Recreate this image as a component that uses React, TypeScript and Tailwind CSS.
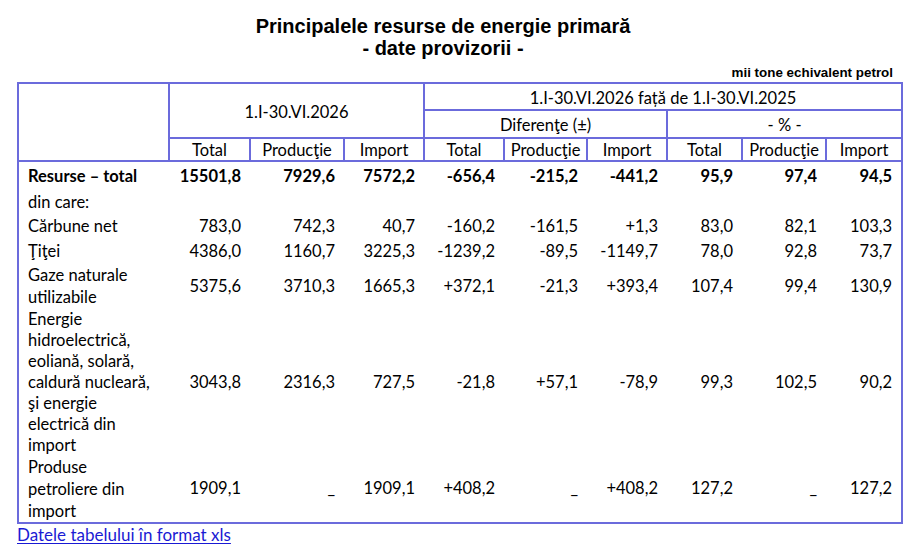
import React from "react";

type Row = {
  label: React.ReactNode;
  values: string[];
  bold?: boolean;
  lh: string;
  h: string;
};

const rows: Row[] = [
  {
    label: "Resurse – total",
    values: ["15501,8", "7929,6", "7572,2", "-656,4", "-215,2", "-441,2", "95,9", "97,4", "94,5"],
    bold: true,
    lh: "leading-[22px]",
    h: "h-[29px]",
  },
  { label: "din care:", values: [], lh: "leading-[22px]", h: "h-[23px]" },
  {
    label: "Cărbune net",
    values: ["783,0", "742,3", "40,7", "-160,2", "-161,5", "+1,3", "83,0", "82,1", "103,3"],
    lh: "leading-[22px]",
    h: "h-[26px]",
  },
  {
    label: "Ţiţei",
    values: ["4386,0", "1160,7", "3225,3", "-1239,2", "-89,5", "-1149,7", "78,0", "92,8", "73,7"],
    lh: "leading-[22px]",
    h: "h-[24px]",
  },
  {
    label: (
      <>
        Gaze naturale
        <br />
        utilizabile
      </>
    ),
    values: ["5375,6", "3710,3", "1665,3", "+372,1", "-21,3", "+393,4", "107,4", "99,4", "130,9"],
    lh: "leading-[22.5px]",
    h: "h-[45px]",
  },
  {
    label: (
      <>
        Energie
        <br />
        hidroelectrică,
        <br />
        eoliană, solară,
        <br />
        caldură nucleară,
        <br />
        şi energie
        <br />
        electrică din
        <br />
        import
      </>
    ),
    values: ["3043,8", "2316,3", "727,5", "-21,8", "+57,1", "-78,9", "99,3", "102,5", "90,2"],
    lh: "leading-[21px]",
    h: "h-[147px]",
  },
  {
    label: (
      <>
        Produse
        <br />
        petroliere din
        <br />
        import
      </>
    ),
    values: ["1909,1", "_", "1909,1", "+408,2", "_", "+408,2", "127,2", "_", "127,2"],
    lh: "leading-[22px]",
    h: "h-[66px]",
  },
];

const colWidths = [
  "w-[151px]",
  "w-[81px]",
  "w-[94px]",
  "w-[80px]",
  "w-[80px]",
  "w-[83px]",
  "w-[80px]",
  "w-[75px]",
  "w-[84px]",
  "w-[76px]",
];

const th = "border-2 border-[#6b6bdc] text-center font-normal align-middle pt-[2px]";

export default function App() {
  return (
    <div className="bg-white w-[914px] h-[554px] text-black px-[17px]">
      <div className="pr-[28px] pt-[15px] text-center font-['Liberation_Sans',Arial,sans-serif] font-bold text-[20px] leading-[22px]">
        <div>Principalele resurse de energie primară</div>
        <div>- date provizorii -</div>
      </div>
      <div className="mt-[6px] pr-[4px] text-right font-['Liberation_Sans',Arial,sans-serif] font-bold text-[13.4px] leading-[15px]">
        mii tone echivalent petrol
      </div>
      <table className="mt-[2px] w-[884px] table-fixed border-collapse border-2 border-[#6b6bdc] font-['Lato','Carlito',sans-serif] text-[16.5px]">
        <colgroup>
          {colWidths.map((w, i) => (
            <col key={i} className={w} />
          ))}
        </colgroup>
        <thead>
          <tr className="h-[27px] leading-[20px]">
            <th rowSpan={3} className={th}></th>
            <th rowSpan={2} colSpan={3} className={th}>
              1.I-30.VI.2026
            </th>
            <th colSpan={6} className={th}>
              1.I-30.VI.2026 față de 1.I-30.VI.2025
            </th>
          </tr>
          <tr className="h-[28px] leading-[20px]">
            <th colSpan={3} className={th}>
              Diferenţe (±)
            </th>
            <th colSpan={3} className={th}>
              - % -
            </th>
          </tr>
          <tr className="h-[23px] leading-[19px]">
            {["Total", "Producţie", "Import", "Total", "Producţie", "Import", "Total", "Producţie", "Import"].map(
              (t, i) => (
                <th key={i} className={th}>
                  {t}
                </th>
              )
            )}
          </tr>
        </thead>
        <tbody>
          {rows.map((r, i) => (
            <tr key={i} className={`${r.h} ${r.bold ? "font-bold" : ""}`}>
              <td className={`pl-[9px] align-middle whitespace-nowrap ${r.lh}`}>{r.label}</td>
              {Array.from({ length: 9 }).map((_, j) => (
                <td key={j} className="pr-[9px] text-right align-middle whitespace-nowrap">
                  {r.values[j] ?? ""}
                </td>
              ))}
            </tr>
          ))}
        </tbody>
      </table>
      <a
        href="#"
        className="block w-fit font-['Lato','Carlito',sans-serif] text-[17px] leading-[22px] text-[#1a1ad4] underline underline-offset-2"
      >
        Datele tabelului în format xls
      </a>
    </div>
  );
}
